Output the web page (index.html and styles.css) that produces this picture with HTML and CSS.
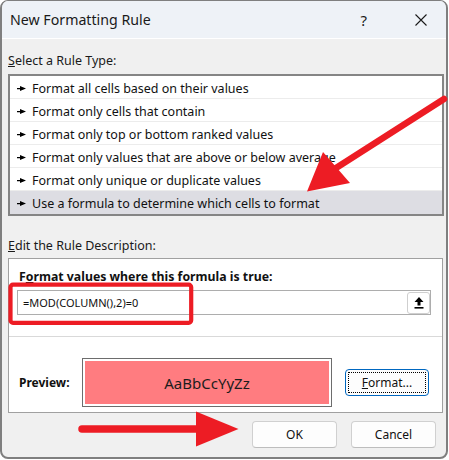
FILE: index.html
```html
<!DOCTYPE html>
<html>
<head>
<meta charset="utf-8">
<link rel="stylesheet" href="styles.css">
</head>
<body>
<div class="dialog">
  <div class="titlebar">
    <span class="title">New Formatting Rule</span>
    <span class="help">?</span>
    <svg class="close" width="12" height="12" viewBox="0 0 12 12"><path d="M0.5 0.5L11.5 11.5M11.5 0.5L0.5 11.5" stroke="#1a1a1a" stroke-width="1.1"/></svg>
  </div>
  <div class="content">
    <div class="label"><u>S</u>elect a Rule Type:</div>
    <ul class="rules">
      <li><svg class="ptr" width="9" height="5" viewBox="0 0 9 5"><path d="M0 2h4v1.2H0z M3 0L9 2.5L3 5z" fill="#000"/></svg>Format all cells based on their values</li>
      <li><svg class="ptr" width="9" height="5" viewBox="0 0 9 5"><path d="M0 2h4v1.2H0z M3 0L9 2.5L3 5z" fill="#000"/></svg>Format only cells that contain</li>
      <li><svg class="ptr" width="9" height="5" viewBox="0 0 9 5"><path d="M0 2h4v1.2H0z M3 0L9 2.5L3 5z" fill="#000"/></svg>Format only top or bottom ranked values</li>
      <li><svg class="ptr" width="9" height="5" viewBox="0 0 9 5"><path d="M0 2h4v1.2H0z M3 0L9 2.5L3 5z" fill="#000"/></svg>Format only values that are above or below average</li>
      <li><svg class="ptr" width="9" height="5" viewBox="0 0 9 5"><path d="M0 2h4v1.2H0z M3 0L9 2.5L3 5z" fill="#000"/></svg>Format only unique or duplicate values</li>
      <li class="selected"><svg class="ptr" width="9" height="5" viewBox="0 0 9 5"><path d="M0 2h4v1.2H0z M3 0L9 2.5L3 5z" fill="#000"/></svg>Use a formula to determine which cells to format</li>
    </ul>
    <div class="label label-edit"><u>E</u>dit the Rule Description:</div>
    <div class="desc">
      <div class="desc-top">
        <div class="bold-label">F<u>o</u>rmat values where this formula is true:</div>
        <div class="formula">
          <span class="formula-text">=MOD(COLUMN(),2)=0</span>
          <span class="ref-btn"><svg width="10" height="12" viewBox="0 0 10 12"><path d="M5 0L9.5 5H6.5V8.5H3.5V5H0.5Z" fill="#000"/><rect x="0.5" y="10" width="9" height="1.6" fill="#000"/></svg></span>
        </div>
      </div>
      <div class="preview-row">
        <div class="bold-label preview-label">Preview:</div>
        <div class="preview-box"><div class="preview-fill">AaBbCcYyZz</div></div>
        <div class="format-btn"><span class="focus"><u>F</u>ormat...</span></div>
      </div>
    </div>
    <div class="buttons">
      <div class="btn">OK</div>
      <div class="btn">Cancel</div>
    </div>
  </div>
</div>
<svg class="annot" width="449" height="460" viewBox="0 0 449 460">
  <rect x="10.5" y="284.7" width="180.7" height="38.1" rx="2.5" fill="none" stroke="#ed1c24" stroke-width="4.2"/>
  <line x1="444" y1="99" x2="336" y2="168" stroke="#ed1c24" stroke-width="6.5" stroke-linecap="round"/>
  <path d="M307 191.5L323 152L350 183Z" fill="#ed1c24"/>
  <line x1="82" y1="429" x2="200" y2="429" stroke="#ed1c24" stroke-width="7.5" stroke-linecap="round"/>
  <path d="M196 411.5L238.5 429L196 446.5Z" fill="#ed1c24"/>
</svg>
</body>
</html>
```

FILE: styles.css
```css
* { box-sizing: border-box; }
body {
  margin: 0;
  position: relative;
  background: #ffffff;
  font-family: "Noto Sans", "Open Sans", sans-serif;
  font-size: 12px;
  color: #000;
}
.dialog {
  width: 448px;
  height: 459px;
  border-style: solid;
  border-color: #7f7f7f;
  border-width: 1px 2px 2px 2px;
  border-radius: 8px;
  background: #f0f0f0;
  overflow: hidden;
}
.titlebar {
  height: 38px;
  background: #eef2f7;
  border-bottom: 1px solid #ffffff;
  display: flex;
  align-items: center;
  padding-left: 8px;
}
.title {
  flex: 1;
  font-size: 14.2px;
  color: #1a1a1a;
}
.help {
  font-size: 15px;
  color: #1a1a1a;
  margin-right: 48px;
}
.close {
  margin-right: 19px;
}
.content {
  padding: 0 2px 0 6px;
}
.label {
  height: 16px;
  line-height: 16px;
  margin-top: 14px;
  font-size: 12.5px;
  color: #1a1a1a;
}
.rules {
  list-style: none;
  margin: 5px 0 0;
  padding: 0;
  border: 2px solid #858585;
  background: #fff;
  width: 436px;
}
.rules li {
  height: 23px;
  border-bottom: 1px solid #ececec;
  display: flex;
  align-items: center;
  padding-left: 7px;
  padding-top: 2px;
  font-size: 12.5px;
  color: #111;
}
.rules li:last-child {
  border-bottom: none;
}
.rules li.selected {
  background: #dddde3;
}
.ptr {
  margin-right: 6px;
  flex: none;
}
.label-edit {
  margin-top: 22px;
}
.desc {
  margin-top: 4px;
  width: 435px;
  height: 155px;
  border: 1px solid #a0a0a0;
  background: #fff;
}
.desc-top {
  height: 78px;
  padding-top: 10px;
  border-bottom: 1px solid #d9d9d9;
}
.bold-label {
  font-weight: bold;
  font-size: 12.3px;
  line-height: 16px;
  height: 16px;
  margin-left: 10px;
  color: #111;
}
.formula {
  margin: 5px 0 0 8px;
  width: 414px;
  height: 25px;
  border: 1px solid #adadad;
  display: flex;
  align-items: center;
  padding-left: 5px;
}
.formula-text {
  flex: 1;
  font-size: 11px;
  color: #111;
}
.ref-btn {
  width: 23px;
  height: 22px;
  border: 1px solid #cfcfcf;
  border-radius: 3px;
  background: #fff;
  display: flex;
  align-items: center;
  justify-content: center;
}
.preview-row {
  display: flex;
  align-items: center;
  padding-top: 21px;
}
.preview-label {
  width: 63px;
  flex: none;
  margin-left: 10px;
  font-size: 12px;
}
.preview-box {
  width: 250px;
  height: 49px;
  border: 1px solid #6d6d6d;
  padding: 2px;
  background: #fff;
}
.preview-fill {
  height: 100%;
  background: #ff7c80;
  display: flex;
  align-items: center;
  justify-content: center;
  font-size: 15px;
  color: #1c1c1c;
}
.format-btn {
  margin-left: 13px;
  width: 84px;
  height: 27px;
  border: 1px solid #0067c0;
  border-radius: 4px;
  background: #fdfdfd;
  padding: 2px;
}
.focus {
  display: flex;
  align-items: center;
  justify-content: center;
  width: 100%;
  height: 100%;
  border: 1px dotted #000;
  color: #111;
}
.buttons {
  margin-top: 8px;
  display: flex;
  justify-content: flex-end;
  gap: 14px;
  padding-right: 8px;
}
.btn {
  width: 85px;
  height: 27px;
  border: 1px solid #d0d0d0;
  border-bottom-color: #bdbdbd;
  border-radius: 4px;
  background: #fdfdfd;
  display: flex;
  align-items: center;
  justify-content: center;
  color: #111;
}
.annot {
  position: absolute;
  left: 0;
  top: 0;
  pointer-events: none;
}
```
